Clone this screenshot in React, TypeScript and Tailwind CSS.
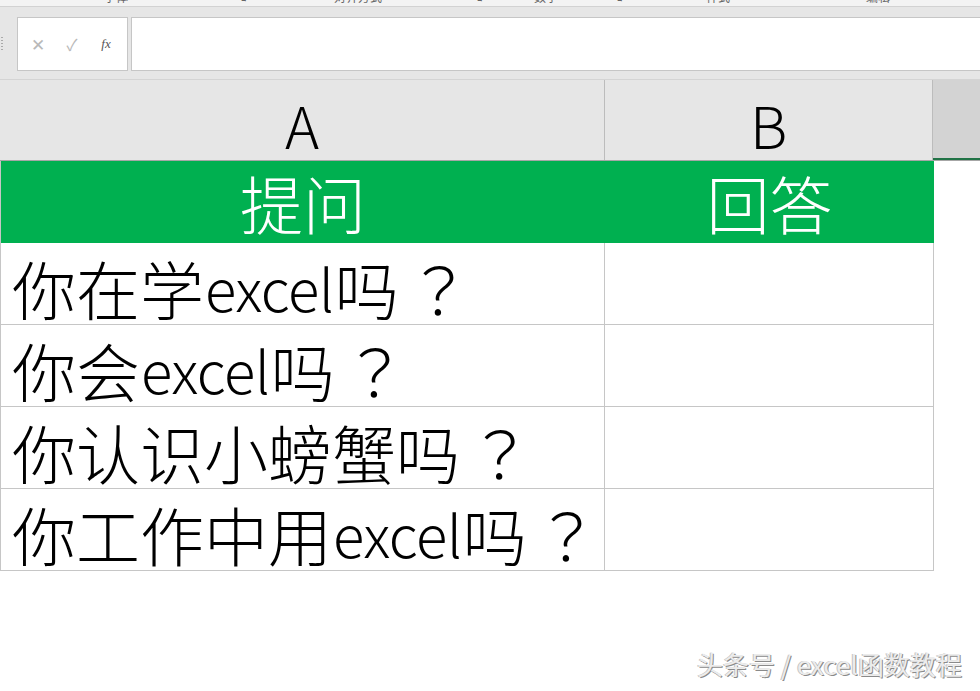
import React from "react";

const rows = ["你在学excel吗？", "你会excel吗？", "你认识小螃蟹吗？", "你工作中用excel吗？"];

const ribbon = [
  { x: 104, t: "字体" },
  { x: 236, t: "↘" },
  { x: 334, t: "对齐方式" },
  { x: 472, t: "↘" },
  { x: 534, t: "数字" },
  { x: 612, t: "↘" },
  { x: 706, t: "样式" },
  { x: 866, t: "编辑" },
];

// split a question into CJK / latin / punctuation runs so each gets the right size
function Question({ text }: { text: string }) {
  const parts = text.match(/[A-Za-z]+|？|[^A-Za-z？]+/g) ?? [];
  return (
    <>
      {parts.map((p, i) =>
        /[A-Za-z]/.test(p) ? (
          <span key={i} className="text-[58px] tracking-[-0.5px] px-[1px]">
            {p}
          </span>
        ) : p === "？" ? (
          <span
            key={i}
            className="inline-block w-[64px] ml-[8px] text-center"
            style={{ fontFamily: '"Noto Sans CJK JP", "Noto Sans CJK SC", sans-serif' }}
          >
            {p}
          </span>
        ) : (
          <span key={i}>{p}</span>
        )
      )}
    </>
  );
}

export default function App() {
  return (
    <div
      className="w-[980px] h-[691px] bg-white overflow-hidden flex flex-col"
      style={{ fontFamily: '"Noto Sans CJK SC", "Noto Sans", sans-serif' }}
    >
      {/* ribbon bottom, cut off */}
      <div className="h-[7px] bg-[#f3f3f3] border-b border-[#d2d2d2] relative overflow-hidden">
        {ribbon.map((r) => (
          <span
            key={r.x}
            className="absolute -top-[10px] text-[12px] leading-[14px] text-[#666]"
            style={{ left: r.x }}
          >
            {r.t}
          </span>
        ))}
      </div>

      {/* formula bar */}
      <div className="h-[73px] bg-[#e6e6e6] flex items-start pt-[10px] border-b border-[#d4d4d4]">
        <div className="w-[17px] h-[53px] flex flex-col items-center justify-center gap-[2px] pr-[13px]">
          {[0, 1, 2, 3, 4].map((i) => (
            <span key={i} className="w-[2px] h-[1px] bg-[#aaa]" />
          ))}
        </div>
        <div className="w-[111px] h-[54px] bg-white border border-[#c6c6c6] flex items-center text-[#b9b9b9]">
          <span className="w-[38px] text-center text-[17px] pl-[2px]">✕</span>
          <span className="w-[32px] text-center text-[16px]">✓</span>
          <span
            className="w-[36px] text-center text-[13px] italic text-[#555]"
            style={{ fontFamily: '"Liberation Serif", serif' }}
          >
            fx
          </span>
        </div>
        <div className="ml-[3px] flex-1 h-[54px] bg-white border border-[#c6c6c6] border-r-0" />
      </div>

      {/* column headers */}
      <div className="flex h-[81px] border-b border-[#a6a6a6]">
        <div className="w-[605px] bg-[#e6e6e6] border-r border-[#bcbcbc] flex items-center justify-center text-[58px] font-light text-black leading-none pt-[8px]">
          A
        </div>
        <div className="w-[328px] bg-[#e6e6e6] border-r border-[#bcbcbc] flex items-center justify-center text-[58px] font-light text-black leading-none pt-[8px]">
          B
        </div>
        <div className="flex-1 bg-[#d3d3d3] border-b-2 border-[#217346]" />
      </div>

      {/* sheet */}
      <div className="flex flex-col w-[934px] border-l border-[#c6c6c6]">
        <div className="flex h-[82px] bg-[#00b050] text-white text-[63px] font-light leading-none">
          <div className="w-[604px] flex items-center justify-center pb-[2px]">提问</div>
          <div className="w-[329px] flex items-center justify-center pb-[2px]">回答</div>
        </div>
        {rows.map((q) => (
          <div key={q} className="flex h-[82px] border-b border-[#c6c6c6]">
            <div className="w-[604px] border-r border-[#c6c6c6] flex items-center pl-[11px] pt-[6px] text-[64px] font-light leading-none text-black whitespace-nowrap">
              <Question text={q} />
            </div>
            <div className="w-[329px] border-r border-[#c6c6c6]" />
          </div>
        ))}
      </div>

      {/* watermark */}
      <div className="flex justify-end pr-[18px] mt-[80px]">
        <span
          className="text-[26px] leading-none text-[#ececec]"
          style={{ textShadow: "1px 1px 0 #8a8a8a, -1px 0 0 #c2c2c2" }}
        >
          头条号 / excel函数教程
        </span>
      </div>
    </div>
  );
}
